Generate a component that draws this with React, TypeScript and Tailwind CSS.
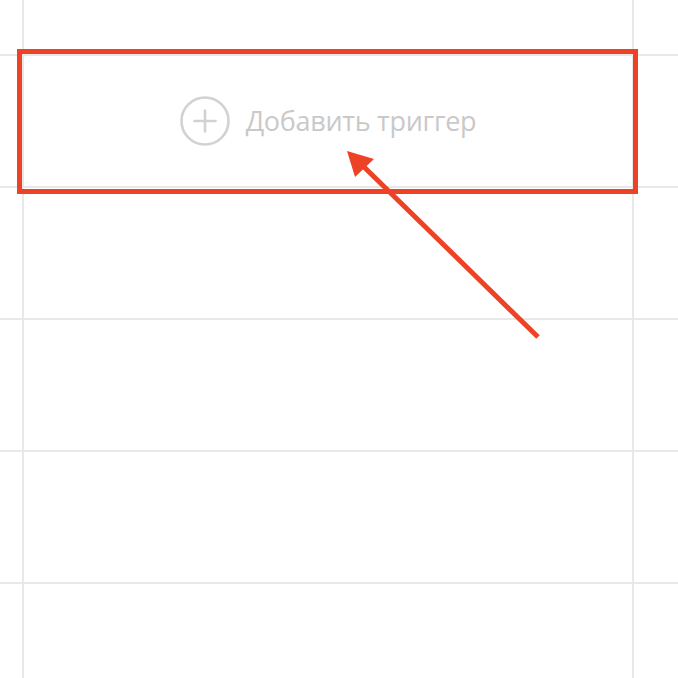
const Row = ({ height, children }: { height: string; children?: React.ReactNode }) => {
  return (
    <div className={`flex ${height} border-b-2 border-[#e8e8e8]`}>
      <div className="w-[22px] shrink-0"></div>
      <div className="w-[612px] shrink-0 border-x-2 border-[#e8e8e8] flex items-center justify-center">
        {children}
      </div>
      <div className="flex-1"></div>
    </div>
  );
};

const PlusCircle = () => (
  <svg width="50" height="50" viewBox="0 0 50 50" fill="none">
    <circle cx="25" cy="25" r="23.5" stroke="#d2d2d2" strokeWidth="2.6" />
    <path d="M25 14.5 V35.5 M14.5 25 H35.5" stroke="#d2d2d2" strokeWidth="2.6" strokeLinecap="round" />
  </svg>
);

export default function App() {
  return (
    <div className="relative w-[678px] h-[678px] overflow-hidden bg-white">
      <div className="flex flex-col">
        <Row height="h-[56px]" />
        <Row height="h-[132px]">
          <button className="flex items-center gap-[16px] pb-[1px]">
            <PlusCircle />
            <span
              className="text-[27px] leading-none text-[#c9c9c9] tracking-[-0.3px]"
              style={{ fontFamily: '"Open Sans", "Noto Sans", sans-serif' }}
            >
              Добавить триггер
            </span>
          </button>
        </Row>
        <Row height="h-[132px]" />
        <Row height="h-[132px]" />
        <Row height="h-[132px]" />
        <Row height="h-[132px]" />
      </div>

      {/* annotation */}
      <div className="absolute left-[17px] top-[49px] w-[621px] h-[145px] border-[5px] border-[#ee4227]"></div>
      <svg className="absolute left-0 top-0" width="678" height="678" viewBox="0 0 678 678">
        <line x1="538" y1="337" x2="362" y2="165" stroke="#ee4227" strokeWidth="5" />
        <polygon points="347,151 374,159 355,177" fill="#ee4227" />
      </svg>
    </div>
  );
}
